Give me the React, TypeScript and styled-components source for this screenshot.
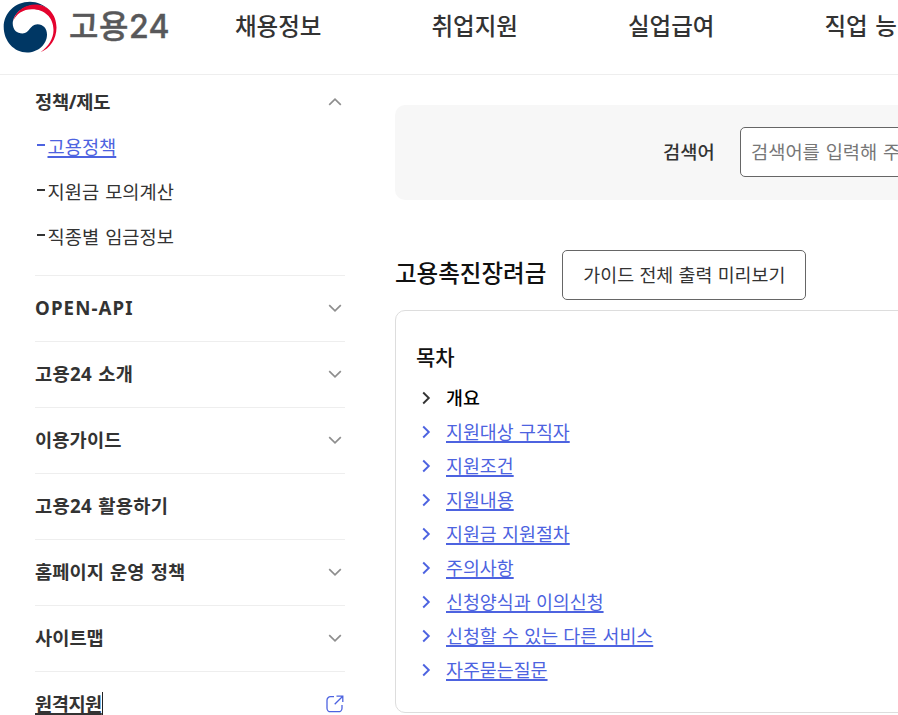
import React from "react";
import styled, { createGlobalStyle } from "styled-components";

const Global = createGlobalStyle`
  *, *::before, *::after { box-sizing: border-box; }
  html, body { margin: 0; padding: 0; background: #fff; overflow: hidden; }
  body { font-family: "Noto Sans", "Noto Sans CJK KR", sans-serif; color: #333; }
  ul { list-style: none; margin: 0; padding: 0; }
  h2, h3 { margin: 0; }
  a { color: inherit; text-decoration: none; }
`;

const Page = styled.div`
  width: 898px;
  height: 715px;
  overflow: hidden;
`;

const Header = styled.header`
  display: flex;
  height: 75px;
  border-bottom: 1px solid #eee;
`;

const Brand = styled.a`
  display: flex;
  flex: none;
  width: 235px;
`;

const Emblem = styled.svg`
  flex: none;
  width: 60px;
  height: 56px;
`;

const BrandName = styled.span`
  margin-left: 9px;
  font-family: Inter, "Noto Sans CJK KR", sans-serif;
  font-size: 32px;
  font-weight: 500;
  line-height: 54px;
  letter-spacing: 0.5px;
  color: #58585a;
  -webkit-text-stroke: 0.4px #58585a;
  white-space: nowrap;
`;

const Gnb = styled.nav`
  display: flex;
`;

const GnbItem = styled.a`
  flex: none;
  width: 196.5px;
  font-size: 23.5px;
  font-weight: 500;
  line-height: 53px;
  word-spacing: 1.5px;
  white-space: nowrap;
`;

const Body = styled.div`
  display: flex;
  padding-left: 35px;
  gap: 50px;
`;

const Sidebar = styled.aside`
  flex: none;
  width: 310px;
`;

const Group = styled.section`
  border-bottom: 1px solid #eee;
`;

const GroupHead = styled.div<{ $first?: boolean }>`
  display: flex;
  align-items: center;
  justify-content: space-between;
  height: ${(p) => (p.$first ? 50 : 65)}px;
  padding-top: ${(p) => (p.$first ? 4 : 0)}px;
  padding-bottom: ${(p) => (p.$first ? 0 : 2)}px;
  font-size: 18.7px;
  font-weight: 700;
  white-space: nowrap;
`;

const GroupLabel = styled.span<{ $active?: boolean; $tracking?: number }>`
  word-spacing: 1.2px;
  letter-spacing: ${(p) => p.$tracking ?? 0}px;
  line-height: 24px;
  text-decoration: ${(p) => (p.$active ? "underline" : "none")};
  text-decoration-thickness: 2px;
  text-underline-offset: 2px;
  border-right: ${(p) => (p.$active ? "1px solid #222" : "0")};
`;

const ToggleIcon = styled.svg<{ $open?: boolean }>`
  width: 20px;
  height: 20px;
  fill: none;
  stroke: #8e8e8e;
  stroke-width: 1.7;
  transform: ${(p) => (p.$open ? "rotate(180deg)" : "none")};
`;

const LinkIcon = styled.svg`
  width: 20px;
  height: 20px;
  fill: none;
  stroke: #4d63e0;
  stroke-width: 1.3;
`;

const SubList = styled.ul`
  margin-top: -2px;
  padding-bottom: 17px;
`;

const SubItem = styled.li<{ $active?: boolean }>`
  display: flex;
  height: 45px;
  align-items: center;
  font-size: 18.7px;
  color: ${(p) => (p.$active ? "#4d63e0" : "#333")};
  word-spacing: 1.2px;
  white-space: nowrap;

  &::before {
    content: "";
    width: 8px;
    height: 2px;
    margin: 0 2.5px 1px 2px;
    background: currentColor;
  }

  a {
    text-decoration: ${(p) => (p.$active ? "underline" : "none")};
    text-decoration-thickness: 2px;
    text-underline-offset: 2px;
  }
`;

const Main = styled.main`
  flex: none;
  width: 900px;
  padding-top: 30px;
`;

const SearchPanel = styled.form`
  display: flex;
  align-items: center;
  height: 95px;
  padding: 0 0 1px 268px;
  border-radius: 10px;
  background: #f7f7f7;
`;

const SearchLabel = styled.label`
  flex: none;
  width: 77px;
  padding-bottom: 3px;
  font-size: 18.7px;
  font-weight: 500;
`;

const SearchInput = styled.input`
  width: 400px;
  height: 50px;
  padding: 0 10px 1px;
  border: 1px solid #666;
  border-radius: 5px;
  background: #fff;
  font: 18.7px "Noto Sans", "Noto Sans CJK KR", sans-serif;
  word-spacing: 1px;

  &::placeholder { color: #777; opacity: 1; }
`;

const TitleRow = styled.div`
  display: flex;
  align-items: center;
  gap: 16px;
  height: 50px;
  margin: 50px 0 10px;
`;

const Title = styled.h2`
  font-size: 23.5px;
  font-weight: 500;
  line-height: 46px;
  padding-bottom: 4px;
  color: #111;
`;

const PreviewButton = styled.button`
  width: 244px;
  height: 50px;
  padding: 0 0 2px;
  border: 1px solid #666;
  border-radius: 5px;
  background: #fff;
  color: #333;
  font: 18.4px "Noto Sans", "Noto Sans CJK KR", sans-serif;
  word-spacing: 0.5px;
`;

const Contents = styled.section`
  height: 403px;
  padding: 29px 20px;
  border: 1px solid #ddd;
  border-radius: 10px;
`;

const ContentsTitle = styled.h3`
  font-size: 21px;
  font-weight: 500;
  line-height: 34px;
  height: 40px;
  color: #111;
`;

const Entry = styled.li<{ $current?: boolean }>`
  display: flex;
  align-items: center;
  height: 34px;
  font-size: 18.4px;
  font-weight: ${(p) => (p.$current ? 500 : 400)};
  color: ${(p) => (p.$current ? "#000" : "#4d63e0")};
  word-spacing: 0.5px;

  svg {
    width: 20px;
    height: 20px;
    margin: 1px 10px 0 0;
    fill: none;
    stroke: ${(p) => (p.$current ? "#333" : "#4d63e0")};
    stroke-width: 1.9;
  }

  a {
    text-decoration: ${(p) => (p.$current ? "none" : "underline")};
    text-decoration-thickness: 2px;
    text-underline-offset: 2px;
  }
`;

const menu = ["채용정보", "취업지원", "실업급여", "직업 능력개발"];

const policyLinks = ["고용정책", "지원금 모의계산", "직종별 임금정보"];

const groups: { label: string; expandable: boolean; tracking?: number }[] = [
  { label: "OPEN-API", expandable: true, tracking: 1.1 },
  { label: "고용24 소개", expandable: true, tracking: 0.3 },
  { label: "이용가이드", expandable: true, tracking: 0.1 },
  { label: "고용24 활용하기", expandable: false, tracking: 0.3 },
  { label: "홈페이지 운영 정책", expandable: true, tracking: 0.05 },
  { label: "사이트맵", expandable: true },
];

const entries = [
  "개요",
  "지원대상 구직자",
  "지원조건",
  "지원내용",
  "지원금 지원절차",
  "주의사항",
  "신청양식과 이의신청",
  "신청할 수 있는 다른 서비스",
  "자주묻는질문",
];

const Toggle = ({ open }: { open?: boolean }) => (
  <ToggleIcon viewBox="0 0 20 20" $open={open}>
    <path d="M4.2 7.2 10 12.8l5.8-5.6" />
  </ToggleIcon>
);

export default function App() {
  return (
    <>
      <Global />
      <Page>
        <Header>
          <Brand href="#">
            <Emblem viewBox="0 0 60 56">
              <path fill="#003764" d="M50 10.500C44 4.500 37 1.700 30 1.700C15 1.700 3.700 13 3.700 27C3.700 41 14 52.500 27 52.500C38 52.500 47 44.500 47 34.500C47 28.500 43 24.300 37.500 24.300C29.500 24.300 30 33.500 22.500 33.500C17 33.500 12.700 30 12.700 23C14 12 25 5 36 5C42 5 46 7 50 10.500Z" />
              <path fill="#e4032e" d="M13 21.500C15.500 11 25 4.600 35.500 4.600C47.500 4.600 56.500 14.500 56.500 27.500C56.500 39 50 48.500 40.500 52.300C48.500 46.500 53.500 38.500 53.500 30C53.500 17.500 44.500 9.300 32 9.300C23 9.300 16 14 13 21.500Z" />
            </Emblem>
            <BrandName>고용24</BrandName>
          </Brand>
          <Gnb>
            {menu.map((m) => (
              <GnbItem key={m} href="#">{m}</GnbItem>
            ))}
          </Gnb>
        </Header>
        <Body>
          <Sidebar>
            <Group>
              <GroupHead $first>
                <GroupLabel $tracking={-0.3}>정책/제도</GroupLabel>
                <Toggle open />
              </GroupHead>
              <SubList>
                {policyLinks.map((l, i) => (
                  <SubItem key={l} $active={i === 0}>
                    <a href="#">{l}</a>
                  </SubItem>
                ))}
              </SubList>
            </Group>
            {groups.map((g) => (
              <Group key={g.label}>
                <GroupHead>
                  <GroupLabel $tracking={g.tracking}>{g.label}</GroupLabel>
                  {g.expandable && <Toggle />}
                </GroupHead>
              </Group>
            ))}
            <GroupHead>
              <GroupLabel $active $tracking={-0.5}>원격지원</GroupLabel>
              <LinkIcon viewBox="0 0 20 20">
                <path d="M9 2.700H5.500a3.500 3.500 0 0 0-3.500 3.500v8A3.500 3.500 0 0 0 5.500 17.700h8a3.500 3.500 0 0 0 3.500-3.500V11M11.500 2.200H17.800V8M17.500 2.500 9.700 10.300" />
              </LinkIcon>
            </GroupHead>
          </Sidebar>
          <Main>
            <SearchPanel>
              <SearchLabel htmlFor="keyword">검색어</SearchLabel>
              <SearchInput id="keyword" placeholder="검색어를 입력해 주세요" />
            </SearchPanel>
            <TitleRow>
              <Title>고용촉진장려금</Title>
              <PreviewButton type="button">가이드 전체 출력 미리보기</PreviewButton>
            </TitleRow>
            <Contents>
              <ContentsTitle>목차</ContentsTitle>
              <ul>
                {entries.map((e, i) => (
                  <Entry key={e} $current={i === 0}>
                    <svg viewBox="0 0 20 20">
                      <path d="M7.200 4.500 12.800 10 7.200 15.500" />
                    </svg>
                    <a href="#">{e}</a>
                  </Entry>
                ))}
              </ul>
            </Contents>
          </Main>
        </Body>
      </Page>
    </>
  );
}
